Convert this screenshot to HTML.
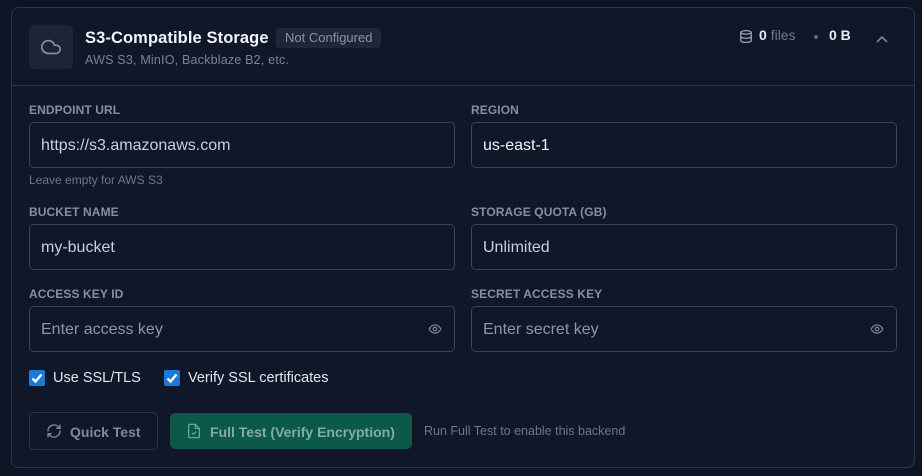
<!DOCTYPE html>
<html><head><style>
*{box-sizing:border-box;margin:0;padding:0}
body{width:922px;height:476px;background:#0d1424;font-family:"Liberation Sans",sans-serif;position:relative;overflow:hidden}
.card{position:absolute;left:11px;top:7px;width:904px;height:461px;border:1px solid #2b3646;border-radius:8px;background:#0f1729}
.abs{position:absolute}
.lbl{position:absolute;font-size:12px;font-weight:bold;color:#8290a5;letter-spacing:0.1px}
.inp{position:absolute;height:46px;border:1px solid #3a4556;border-radius:5px;background:#0f1729;font-size:16px;color:#c8d0dc;padding:14px 11px 0}
.ph{color:#8d97a6}
.eye{position:absolute;right:11px;top:15px}
.cb{position:absolute;width:16px;height:16px;background:#1e78d8;border-radius:2px}
</style></head><body>
<div class="card">
 <div class="abs" style="left:17px;top:17px;width:44px;height:44px;background:#1c2536;border-radius:5px">
  <svg class="abs" style="left:11px;top:11px" width="22" height="22" viewBox="0 0 24 24" fill="none" stroke="#8591a3" stroke-width="1.8" stroke-linecap="round" stroke-linejoin="round"><path d="M17.5 19H9a7 7 0 1 1 6.71-9h1.79a4.5 4.5 0 1 1 0 9Z"/></svg>
 </div>
 <div class="abs" style="left:73px;top:21px;font-size:16.5px;font-weight:bold;color:#f1f4f8;letter-spacing:0.1px">S3-Compatible Storage</div>
 <div class="abs" style="left:264px;top:20px;height:20px;padding:0 9px;background:#1e2738;border-radius:4px;font-size:13px;line-height:20px;color:#8a94a4">Not Configured</div>
 <div class="abs" style="left:73px;top:45px;font-size:12.5px;color:#76839a;letter-spacing:0.2px">AWS S3, MinIO, Backblaze B2, etc.</div>
 <svg class="abs" style="left:727px;top:21px" width="14" height="15" viewBox="0 0 24 24" fill="none" stroke="#9aa4b3" stroke-width="2.2"><ellipse cx="12" cy="5" rx="9" ry="3"/><path d="M3 5v14c0 1.7 4 3 9 3s9-1.3 9-3V5"/><path d="M3 12c0 1.7 4 3 9 3s9-1.3 9-3"/></svg>
 <div class="abs" style="left:747px;top:19px;font-size:14px;color:#e8edf3;font-weight:bold">0 <span style="font-weight:normal;color:#6f7c90">files</span></div>
 <div class="abs" style="left:802px;top:27px;width:4px;height:4px;border-radius:2px;background:#5c687b"></div>
 <div class="abs" style="left:817px;top:19px;font-size:14px;color:#e8edf3;font-weight:bold">0 B</div>
 <svg class="abs" style="left:863px;top:26px" width="14" height="10" viewBox="0 0 14 10" fill="none" stroke="#7a869a" stroke-width="1.6"><path d="M2 8l5-5 5 5"/></svg>
 <div class="abs" style="left:0;top:77px;width:902px;height:1px;background:#2b3646"></div>
</div>
<div class="lbl" style="left:29px;top:103px">ENDPOINT URL</div>
<div class="lbl" style="left:471px;top:103px">REGION</div>
<div class="inp" style="left:29px;top:122px;width:426px">https://s3.amazonaws.com</div>
<div class="inp" style="left:471px;top:122px;width:426px;color:#f1f4f8">us-east-1</div>
<div class="abs" style="left:29px;top:173px;font-size:12px;color:#6b778b">Leave empty for AWS S3</div>
<div class="lbl" style="left:29px;top:205px">BUCKET NAME</div>
<div class="lbl" style="left:471px;top:205px">STORAGE QUOTA (GB)</div>
<div class="inp" style="left:29px;top:224px;width:426px">my-bucket</div>
<div class="inp" style="left:471px;top:224px;width:426px">Unlimited</div>
<div class="lbl" style="left:29px;top:287px">ACCESS KEY ID</div>
<div class="lbl" style="left:471px;top:287px">SECRET ACCESS KEY</div>
<div class="inp ph" style="left:29px;top:306px;width:426px">Enter access key<svg class="eye" width="16" height="14" viewBox="0 0 24 24" fill="none" stroke="#7e8899" stroke-width="2"><path d="M2 12s3.5-7 10-7 10 7 10 7-3.5 7-10 7S2 12 2 12Z"/><circle cx="12" cy="12" r="3"/></svg></div>
<div class="inp ph" style="left:471px;top:306px;width:426px">Enter secret key<svg class="eye" width="16" height="14" viewBox="0 0 24 24" fill="none" stroke="#7e8899" stroke-width="2"><path d="M2 12s3.5-7 10-7 10 7 10 7-3.5 7-10 7S2 12 2 12Z"/><circle cx="12" cy="12" r="3"/></svg></div>
<div class="cb" style="left:29px;top:370px"><svg width="16" height="16" viewBox="0 0 16 16" fill="none" stroke="#fff" stroke-width="2.4"><path d="M3.5 8.5l3 3 6-7"/></svg></div>
<div class="abs" style="left:53px;top:370px;font-size:14.5px;color:#e2e7ee">Use SSL/TLS</div>
<div class="cb" style="left:164px;top:370px"><svg width="16" height="16" viewBox="0 0 16 16" fill="none" stroke="#fff" stroke-width="2.4"><path d="M3.5 8.5l3 3 6-7"/></svg></div>
<div class="abs" style="left:188px;top:370px;font-size:14.5px;color:#e2e7ee">Verify SSL certificates</div>
<div class="abs" style="left:29px;top:412px;width:129px;height:38px;border:1px solid #2b3646;border-radius:5px"></div>
<svg class="abs" style="left:46px;top:423px" width="16" height="16" viewBox="0 0 24 24" fill="none" stroke="#7d889a" stroke-width="2" stroke-linecap="round"><path d="M3 12a9 9 0 0 1 15.5-6.3L21 8M21 3v5h-5M21 12a9 9 0 0 1-15.5 6.3L3 16M3 21v-5h5"/></svg>
<div class="abs" style="left:70px;top:424px;font-size:14px;font-weight:bold;color:#7f8a9b">Quick Test</div>
<div class="abs" style="left:170px;top:413px;width:242px;height:36px;background:#0b5948;border-radius:5px"></div>
<svg class="abs" style="left:186px;top:422px" width="16" height="18" viewBox="0 0 24 24" fill="none" stroke="#7aa89b" stroke-width="1.8"><path d="M14 2H6a2 2 0 0 0-2 2v16a2 2 0 0 0 2 2h12a2 2 0 0 0 2-2V8Z"/><path d="M14 2v6h6M9 15l2 2 4-4"/></svg>
<div class="abs" style="left:210px;top:424px;font-size:14px;font-weight:bold;color:#86aca1">Full Test (Verify Encryption)</div>
<div class="abs" style="left:424px;top:424px;font-size:12.5px;color:#6b778b">Run Full Test to enable this backend</div>
</body></html>
